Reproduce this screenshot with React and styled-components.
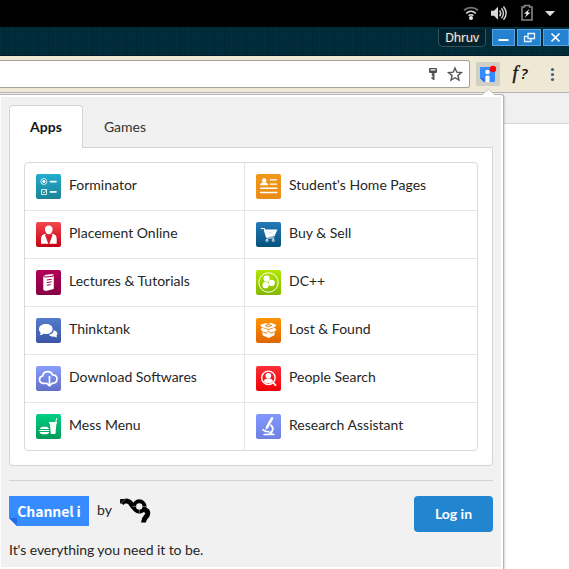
import React from 'react';
import styled, { createGlobalStyle } from 'styled-components';

const GlobalStyle = createGlobalStyle`
  * { box-sizing: border-box; }
  body { margin: 0; background: #fff; overflow: hidden; }
  svg { display: block; flex: none; }
`;

const Desktop = styled.div`
  position: relative;
  width: 569px;
  height: 569px;
  overflow: hidden;
  background: #fff;
  color: #262626;
  font-family: Lato, sans-serif;
  font-size: 14px;
`;

const SystemBar = styled.div`
  display: flex;
  justify-content: flex-end;
  height: 27px;
  background: #000;
`;

const TitleBar = styled.div`
  display: flex;
  justify-content: flex-end;
  height: 29px;
  padding-top: 2px;
  border-bottom: 1px solid #001b27;
  background:
    repeating-linear-gradient(90deg, rgba(0, 80, 110, 0.1) 0 1px, transparent 1px 4px, rgba(0, 20, 30, 0.14) 4px 5px, transparent 5px 11px),
    repeating-linear-gradient(0deg, rgba(0, 75, 100, 0.08) 0 1px, transparent 1px 5px),
    #012b38;
`;

const UserTag = styled.div`
  width: 48px;
  height: 18px;
  margin-right: 6px;
  border: 1px solid #35545e;
  border-top: 0;
  border-radius: 0 0 5px 5px;
  background: #01222c;
  color: #f2eee6;
  font: 12px/18px "Noto Sans", sans-serif;
  letter-spacing: -0.2px;
  text-align: center;
  text-shadow: 0 0 2px #6c4a35;
`;

const WindowButton = styled.div`
  display: flex;
  align-items: center;
  justify-content: center;
  width: ${(p) => p.$width || 23}px;
  height: 17px;
  margin-left: ${(p) => p.$gap || 0}px;
  border: 1px solid #56a4e4;
  background: #2482d0;
`;

const BrowserBar = styled.div`
  display: flex;
  height: 37px;
  padding-top: 4px;
  border-bottom: 1px solid #b3b2b5;
  background: #efe8d5;
`;

const AddressField = styled.div`
  display: flex;
  justify-content: flex-end;
  width: 470px;
  height: 28px;
  border: 1px solid #a5a197;
  border-left: 0;
  border-radius: 0 3px 3px 0;
  background: #fff;
`;

const ExtensionButton = styled.div`
  width: 24px;
  height: 24px;
  margin: 2px 0 0 6px;
  border-radius: 2px;
  background: #d0cfc5;
`;

const FontButton = styled.div`
  display: flex;
  justify-content: center;
  width: 24px;
  margin-left: 8px;
  color: #111;
  font: italic 19px/25px "DejaVu Serif", "Liberation Serif", serif;
  font-family: "Liberation Serif", serif;
  -webkit-text-stroke: 0.4px #111;

  span {
    margin-left: 3px;
    font: italic 600 15px/26px "Open Sans", sans-serif;
    -webkit-text-stroke: 0;
  }
`;

const BookmarkStrip = styled.div`
  height: 31px;
  border-bottom: 1px solid #d5d5d5;
  background: #f0f0f0;
`;

const Popup = styled.div`
  position: absolute;
  top: 94px;
  left: 0;
  width: 504px;
  height: 475px;
  padding: 2px 2px 2px 1px;
  border: solid #b5b5b5;
  border-width: 1px 1px 0 0;
  border-radius: 0 3px 0 0;
  background: #fff;
  box-shadow: 1px 1px 2px rgba(0, 0, 0, 0.15);
`;

const PopupArrow = styled.svg`
  position: absolute;
  top: -7px;
  left: 481px;
`;

const PopupBody = styled.div`
  height: 470px;
  padding: 8px 8px 0;
  background: #f1f1f1;
`;

const TabList = styled.div`
  display: flex;
  height: 42px;
`;

const Tab = styled.div`
  position: relative;
  height: ${(p) => (p.$active ? 43 : 42)}px;
  width: ${(p) => (p.$active ? 74 : 84)}px;
  border: 1px solid ${(p) => (p.$active ? '#d4d4d5' : 'transparent')};
  border-bottom: 0;
  border-radius: 4px 4px 0 0;
  background: ${(p) => (p.$active ? '#fff' : 'transparent')};
  color: ${(p) => (p.$active ? '#151515' : '#333')};
  font-weight: ${(p) => (p.$active ? 700 : 400)};
  line-height: 41px;
  text-align: center;
`;

const TabPanel = styled.div`
  height: 319px;
  padding: 14px;
  border: 1px solid #d4d4d5;
  border-radius: 0 0 4px 4px;
  background: #fff;
`;

const AppGrid = styled.div`
  display: grid;
  grid-template-columns: 220px 1fr;
  grid-auto-rows: 48px;
  height: 289px;
  border: 1px solid #d9dadb;
  border-radius: 4px;
  overflow: hidden;
`;

const AppCell = styled.div`
  display: flex;
  padding: 11px 0 0 11px;
  border-right: ${(p) => (p.$first ? '1px solid #e6e6e7' : '0')};
  border-bottom: ${(p) => (p.$last ? '0' : '1px solid #e6e6e7')};
`;

const AppIcon = styled.div`
  width: 25px;
  height: 25px;
  border-radius: 2px;
  background: ${(p) => `linear-gradient(${p.$from}, ${p.$to})`};
  overflow: hidden;
`;

const AppName = styled.span`
  margin-left: 8px;
  line-height: 22px;
  white-space: nowrap;
`;

const Footer = styled.div`
  display: flex;
  height: 52px;
  margin-top: 14px;
  padding-top: 15px;
  border-top: 1px solid #d2d2d2;
`;

const ChannelLogo = styled.div`
  width: 80px;
  height: 30px;
  background: #368cff;
  clip-path: polygon(0 0, 100% 0, 100% 100%, 8px 100%, 0 22px);
  color: #fff;
  font: bold 14px/30px "Noto Sans CJK JP", sans-serif;
  letter-spacing: -0.1px;
  text-align: center;

  &::before {
    content: '';
    float: left;
    width: 8px;
    height: 8px;
    margin: 22px -8px 0 0;
    background: #246be4;
  }
`;

const ByText = styled.span`
  margin: 0 8px;
  line-height: 28px;
`;

const LoginButton = styled.button`
  width: 79px;
  height: 36px;
  margin-left: auto;
  padding: 0;
  border: 0;
  border-radius: 4px;
  background: #2185d0;
  color: #fff;
  font: bold 14px/36px Lato, sans-serif;
`;

const Tagline = styled.div`
  margin-top: 7px;
  line-height: 22px;
  letter-spacing: -0.08px;
`;

const drawings = {
  form: (
    <g fill="none" stroke="#fff">
      <circle cx="7.8" cy="7.5" r="3" strokeWidth=".8" /><circle cx="7.8" cy="7.5" r="1.5" fill="#fff" stroke="none" />
      <path d="M5.5 15.5h5v5h-5zM6.5 17.6l1.3 1.4 3-3.4" strokeWidth=".8" />
      <path d="M14.5 7.6h5.5M14.5 17.9h5.5" strokeWidth="1.6" strokeLinecap="round" />
    </g>
  ),
  person: (
    <g fill="#fff">
      <path d="M12.8 3.5c2.8 0 4 1.8 3.8 4.2-.2 2.5-1.8 4.5-3.8 4.5S9.2 10.2 9 7.7c-.2-2.400 1-4.200 3.800-4.200Z" />
      <path d="M9.500 11.800 12.800 21l3.300-9.200c3.300.7 4.600 2 4.600 5.200v4.800H5V17c0-3.200 1.300-4.500 4.500-5.200Z" />
      <path d="m9.500 12.800 3.300 8.700 3.300-8.700" fill="none" stroke="#d91c2a" strokeWidth="1.200" />
    </g>
  ),
  book: (
    <g>
      <path d="m7.300 6.500 2.200-1.700 8.300-.8-1.700 2.300 1.700-.5V19l-8 2.100L7.300 20Z" fill="#fff" />
      <path d="m8 6.600 2 .4 7-.8M10.800 10l5-.8M10.800 12.600l5-.8M10.800 15.200l4-.6" stroke="#a90051" fill="none" />
    </g>
  ),
  chat: (
    <g fill="#fff">
      <path d="M10 6c4 0 6.600 2 6.600 5s-2.600 5-6.600 5l-2.500-.3c-1.400 1.100-2.500 1.500-4 1.400.7-.8 1.100-1.400 1.200-2.300C3.700 14 3 12.600 3 11c0-3 3-5 7-5Z" />
      <path d="M17.700 12.200c2.200.4 3.600 1.700 3.600 3.500 0 .9-.4 1.600-1 2.100l.8 1.700c-1.100 0-2-.3-2.700-.9-3.100.2-4.800-.6-5.500-1.800 3-.8 4.700-2.200 4.800-4.600Z" />
    </g>
  ),
  cloud: (
    <g fill="none" stroke="#fff" strokeWidth="1.7" strokeLinecap="round" strokeLinejoin="round">
      <path d="M10 17.300H7.500c-2.200 0-4-1.500-4-3.600 0-2 1.300-3.300 3-3.500C7 7.200 9.200 5.600 12 5.600c2.200 0 4 1.300 4.500 3.200 2.700-.1 4.500 1.600 4.500 4 0 2.700-1.800 4.500-4.500 4.500" />
      <path d="M13.500 10.500v9.300m-2.600-2.400 2.600 2.600 2.600-2.600" />
    </g>
  ),
  meal: (
    <g fill="#fff">
      <path d="M13 8h8v1.600h-.6L19.400 20h-4.600l-1-10.400H13ZM19.300 8l1-4 .9.200-1 4ZM3.800 15c.4-1.600 2-2.200 4.600-2.200s4.200.6 4.600 2.200ZM3.200 15.900h10v1.200h-10ZM3.800 18H13v1c-.8 1-2.300 1.200-4.600 1.200s-3.800-.2-4.600-1.200Z" />
    </g>
  ),
  resume: (
    <g fill="#fff">
      <circle cx="8.200" cy="6.500" r="2.200" />
      <path d="M4 11.300c.2-1.700 1.300-2.400 3.300-2.800h1.800c2 .4 3 1.100 3.200 2.800ZM13.700 5.300H21v1.300h-7.300ZM13.700 9.500H21v1.300h-7.300ZM4 13.600h17.400v1.400H4ZM4 17.800h17.400v1.400H4Z" />
    </g>
  ),
  cart: (
    <g fill="none" stroke="#fff" strokeWidth="1.200">
      <path d="M4.800 6.500h3.500l3 9.500h7" /><path d="M8.500 8h12L18 13.800l-7.600 1Z" fill="#fff" />
      <path d="m8.600 8.500 9.800 4.300M10 12.300l9.700-3.800" strokeWidth=".3" stroke="#8fbddd" />
      <circle cx="11" cy="18.400" r="1" strokeWidth="1" /><circle cx="17.300" cy="18.400" r="1" strokeWidth="1" />
    </g>
  ),
  hub: (
    <g fill="#fff">
      <circle cx="12.500" cy="12.500" r="9.700" fill="none" stroke="#fff" />
      <circle cx="10.600" cy="8.700" r="3.100" /><circle cx="15.700" cy="12.900" r="3.100" /><circle cx="9.600" cy="15.200" r="3.100" />
    </g>
  ),
  box: (
    <g fill="#fff">
      <path d="m4 7 6-2 2.500 1L15 4.700 20.500 7 18.300 9.300 12.500 11 6 9.300ZM5 11l1.200-1.300 6.300 2.200 6.200-2.200L20.500 12l-2 1.200v4L12.500 20l-6-2.800V13L4.500 12Z" />
      <path d="m9.300 7.500 3-1 3.400 1-3.300 1.200ZM7.300 14.200l3 .9 2.200-2 2 2 3.200-.9" fill="none" stroke="#f07f05" strokeWidth="1" />
    </g>
  ),
  search: (
    <g fill="#fff">
      <circle cx="12.400" cy="11.800" r="6.700" fill="none" stroke="#fff" strokeWidth="1.400" />
      <circle cx="12.400" cy="9.800" r="2.800" />
      <path d="M7.800 15c.5-1.500 1.800-2 3.500-2.400h2.200c1.700.4 3 .9 3.500 2.400-1 1.600-2.500 2.300-4.600 2.300S8.800 16.600 7.800 15ZM16.500 17.200l1.200-1.200 2.900 3-1.200 1.200Z" />
    </g>
  ),
  microscope: (
    <g fill="none" stroke="#fff" strokeLinecap="round">
      <path d="M16 4.300 11 13.400" strokeWidth="2.600" /><path d="m10.500 14.200-.7 1.300" />
      <path d="M15 11.200c2.700 2.200 2.400 5.700-.7 7.600" strokeWidth="1.800" />
      <path d="M7 15.700c1.200 1.400 3.400 2.200 5.700 2" strokeWidth="1.700" /><path d="M8 20.500h10" strokeWidth="1.500" /><path d="m13 19.500 2.500-1.800 1 2.300Z" fill="#fff" strokeWidth=".5" />
    </g>
  ),
};

const apps = [
  ['Forminator', 'form', '#22aed0', '#1b8295'],
  ["Student's Home Pages", 'resume', '#f1981a', '#ea8c14'],
  ['Placement Online', 'person', '#f3484d', '#c40016'],
  ['Buy & Sell', 'cart', '#2779b9', '#05527c'],
  ['Lectures & Tutorials', 'book', '#b10057', '#850044'],
  ['DC++', 'hub', '#b4e600', '#83b900'],
  ['Thinktank', 'chat', '#557ccc', '#3b55a5'],
  ['Lost & Found', 'box', '#ff9500', '#df6500'],
  ['Download Softwares', 'cloud', '#899eff', '#626fc8'],
  ['People Search', 'search', '#ff3038', '#ee0005'],
  ['Mess Menu', 'meal', '#00d084', '#039957'],
  ['Research Assistant', 'microscope', '#8298ff', '#6f80e2'],
];

const StatusIcons = () => (
  <svg width="115" height="27" viewBox="454 0 115 27" fill="none">
    <path d="M464 10.200c4-3.500 10-3.500 14 0" stroke="#777" strokeWidth="1.800" />
    <path d="M466.200 13.300c2.900-2.500 6.700-2.500 9.600 0M468.600 15.600c1.500-1.100 3.300-1.100 4.800 0" stroke="#ddd" strokeWidth="1.600" />
    <circle cx="471" cy="18" r="2" fill="#e5e5e5" />
    <path d="M491 10.700h3l4-4v13l-4-4h-3Z" fill="#d8d8d8" />
    <path d="M499.700 10.300c1.300 2 1.300 4 0 6M501.500 8.300c2.500 3.200 2.500 6.800 0 10M503.500 6.500c3.400 4.300 3.400 9.200 0 13.300" stroke="#d5d5d5" strokeWidth="1.400" />
    <path d="M524.500 7V5.500h5V7h2.500v13h-10V7Z" stroke="#858585" strokeWidth="1.600" />
    <path d="m529.500 8.800-5.500 5h2.700l-2 4 5.800-5.200h-2.800Z" fill="#eee" />
    <path d="M545 11h10l-5 5.200Z" fill="#ddd" />
  </svg>
);

const AddressIcons = () => (
  <svg width="44" height="26" viewBox="425 61 44 26" fill="none">
    <path fillRule="evenodd" d="M430 68h6q1 0 1 1v2.800q0 1.200-1.200 1.200h-5.600q-1.200 0-1.200-1.200V69q0-1 1-1Zm.5 1.200v1.300h5v-1.300Z" fill="#4f4f4f" />
    <path d="M431.800 73h2.700v7h-1.800v-1h-1.200v-2h1.200v-1h-.9Z" fill="#5b5b5b" />
    <path d="m455 68 1.800 4.200 4.600.4-3.500 3 1.100 4.500-4-2.400-4 2.400 1.100-4.500-3.500-3 4.600-.4Z" stroke="#555" strokeWidth="1.400" />
  </svg>
);

export default function App() {
  return (
    <Desktop>
      <GlobalStyle />
      <SystemBar><StatusIcons /></SystemBar>
      <TitleBar>
        <UserTag>Dhruv</UserTag>
        <WindowButton><svg width="13" height="13"><path d="M1.500 9h10" stroke="#fff" strokeWidth="2" /></svg></WindowButton>
        <WindowButton $gap={2} $width={24}>
          <svg width="13" height="11" fill="none" stroke="#e8f5ff" strokeWidth="1.300"><path d="M5 1.500h6.500v5H5zM4.500 4.500h-3v5H8V7" /></svg>
        </WindowButton>
        <WindowButton $gap={2} $width={26}>
          <svg width="13" height="11" fill="none" stroke="#fff" strokeWidth="1.700"><path d="m1.500 1.500 8 8m0-8-8 8" /></svg>
        </WindowButton>
      </TitleBar>
      <BrowserBar>
        <AddressField><AddressIcons /></AddressField>
        <ExtensionButton>
          <svg width="24" height="24">
            <path d="M4 5h15v15H8l-4-4Z" fill="#368cff" /><path d="M4 16h4v4Z" fill="#246ae0" />
            <circle cx="11.500" cy="10" r="2.300" fill="#fff" /><path d="M9.500 13.700h4V20h-4Z" fill="#fff" />
            <circle cx="17" cy="7" r="3.200" fill="#fa0008" />
          </svg>
        </ExtensionButton>
        <FontButton>f<span>?</span></FontButton>
        <svg width="37" height="28"><g fill="#3b6382"><circle cx="20.500" cy="9.500" r="1.600" /><circle cx="20.500" cy="14.500" r="1.600" /><circle cx="20.500" cy="19.500" r="1.600" /></g></svg>
      </BrowserBar>
      <BookmarkStrip />
      <Popup>
        <PopupArrow width="15" height="9"><path d="M1 7 7.500 1 14 7v2H1Z" fill="#fff" /><path d="M1 7 7.500 1 14 7" fill="none" stroke="#b7b5b1" strokeWidth=".8" /></PopupArrow>
        <PopupBody>
          <TabList><Tab $active>Apps</Tab><Tab>Games</Tab></TabList>
          <TabPanel>
            <AppGrid>
              {apps.map(([name, icon, from, to], i) => (
                <AppCell key={name} $first={i % 2 === 0} $last={i > 9}>
                  <AppIcon $from={from} $to={to}><svg width="25" height="25">{drawings[icon]}</svg></AppIcon>
                  <AppName>{name}</AppName>
                </AppCell>
              ))}
            </AppGrid>
          </TabPanel>
          <Footer>
            <ChannelLogo>Channel i</ChannelLogo>
            <ByText>by</ByText>
            <svg width="31" height="30" fill="none" stroke="#000">
              <path d="M.2 3h5L.2 8Z" fill="#000" stroke="none" />
              <path d="M1.500 7.500C3 5.300 6 4.500 8.500 5.500c3.200 1.300 3 4.500 5.500 6" strokeWidth="5" />
              <circle cx="19.300" cy="10.500" r="5.200" strokeWidth="4" />
              <path d="M23.500 14c3.500-.5 5 2.200 3.800 5-.8 2-3.600 2.500-3.800 7.500" strokeWidth="5" />
              <path d="M12.500 10.500h3.800m6.200 0h3.800m-7 3v4.500M.5 8 5.500 3" stroke="#aaa" strokeWidth=".6" />
            </svg>
            <LoginButton>Log in</LoginButton>
          </Footer>
          <Tagline>It's everything you need it to be.</Tagline>
        </PopupBody>
      </Popup>
    </Desktop>
  );
}
